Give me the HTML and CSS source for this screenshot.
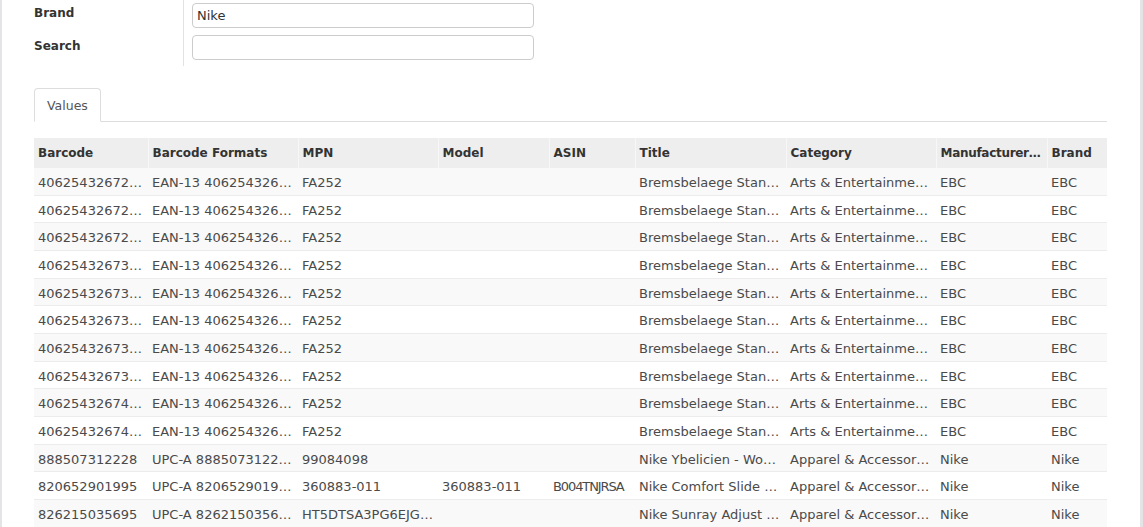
FILE: index.html
```html
<!DOCTYPE html>
<html>
<head>
<meta charset="utf-8">
<link rel="stylesheet" href="styles.css">
</head>
<body>
<div class="panel">
  <div class="form">
    <div class="labels">
      <div class="label">Brand</div>
      <div class="label">Search</div>
    </div>
    <div class="fields">
      <div class="field"><input class="input" type="text" value="Nike"></div>
      <div class="field"><input class="input" type="text" value=""></div>
    </div>
  </div>

  <div class="tabs">
    <div class="tab">Values</div>
  </div>

  <table class="grid">
    <colgroup>
      <col class="c-barcode"><col class="c-formats"><col class="c-mpn"><col class="c-model"><col class="c-asin"><col class="c-title"><col class="c-category"><col class="c-manu"><col class="c-brand">
    </colgroup>
    <thead>
      <tr><th>Barcode</th><th>Barcode Formats</th><th>MPN</th><th>Model</th><th>ASIN</th><th>Title</th><th>Category</th><th class="tight-head">Manufacturer Name</th><th>Brand</th></tr>
    </thead>
    <tbody>
      <tr><td>4062543267200</td><td>EAN-13 4062543267200</td><td>FA252</td><td></td><td></td><td>Bremsbelaege Standard FA252</td><td>Arts &amp; Entertainment &gt; Hobbies</td><td>EBC</td><td>EBC</td></tr>
      <tr><td>4062543267217</td><td>EAN-13 4062543267217</td><td>FA252</td><td></td><td></td><td>Bremsbelaege Standard FA252</td><td>Arts &amp; Entertainment &gt; Hobbies</td><td>EBC</td><td>EBC</td></tr>
      <tr><td>4062543267293</td><td>EAN-13 4062543267293</td><td>FA252</td><td></td><td></td><td>Bremsbelaege Standard FA252</td><td>Arts &amp; Entertainment &gt; Hobbies</td><td>EBC</td><td>EBC</td></tr>
      <tr><td>4062543267309</td><td>EAN-13 4062543267309</td><td>FA252</td><td></td><td></td><td>Bremsbelaege Standard FA252</td><td>Arts &amp; Entertainment &gt; Hobbies</td><td>EBC</td><td>EBC</td></tr>
      <tr><td>4062543267316</td><td>EAN-13 4062543267316</td><td>FA252</td><td></td><td></td><td>Bremsbelaege Standard FA252</td><td>Arts &amp; Entertainment &gt; Hobbies</td><td>EBC</td><td>EBC</td></tr>
      <tr><td>4062543267323</td><td>EAN-13 4062543267323</td><td>FA252</td><td></td><td></td><td>Bremsbelaege Standard FA252</td><td>Arts &amp; Entertainment &gt; Hobbies</td><td>EBC</td><td>EBC</td></tr>
      <tr><td>4062543267330</td><td>EAN-13 4062543267330</td><td>FA252</td><td></td><td></td><td>Bremsbelaege Standard FA252</td><td>Arts &amp; Entertainment &gt; Hobbies</td><td>EBC</td><td>EBC</td></tr>
      <tr><td>4062543267347</td><td>EAN-13 4062543267347</td><td>FA252</td><td></td><td></td><td>Bremsbelaege Standard FA252</td><td>Arts &amp; Entertainment &gt; Hobbies</td><td>EBC</td><td>EBC</td></tr>
      <tr><td>4062543267408</td><td>EAN-13 4062543267408</td><td>FA252</td><td></td><td></td><td>Bremsbelaege Standard FA252</td><td>Arts &amp; Entertainment &gt; Hobbies</td><td>EBC</td><td>EBC</td></tr>
      <tr><td>4062543267415</td><td>EAN-13 4062543267415</td><td>FA252</td><td></td><td></td><td>Bremsbelaege Standard FA252</td><td>Arts &amp; Entertainment &gt; Hobbies</td><td>EBC</td><td>EBC</td></tr>
      <tr><td>888507312228</td><td>UPC-A 888507312228</td><td>99084098</td><td></td><td></td><td>Nike Ybelicien - Women's Shoes</td><td>Apparel &amp; Accessories &gt; Shoes</td><td>Nike</td><td>Nike</td></tr>
      <tr><td>820652901995</td><td>UPC-A 820652901995</td><td>360883-011</td><td>360883-011</td><td class="tight">B004TNJRSA</td><td>Nike Comfort Slide 2 Men's Sandal</td><td>Apparel &amp; Accessories &gt; Shoes</td><td>Nike</td><td>Nike</td></tr>
      <tr><td>826215035695</td><td>UPC-A 826215035695</td><td>HT5DTSA3PG6EJG3KX</td><td></td><td></td><td>Nike Sunray Adjust 5 Sandal</td><td>Apparel &amp; Accessories &gt; Shoes</td><td>Nike</td><td>Nike</td></tr>
    </tbody>
  </table>
</div>
</body>
</html>
```

FILE: styles.css
```css
html, body {
  margin: 0;
  padding: 0;
  background: #e4e4e6;
  height: 100%;
  overflow: hidden;
}

.panel {
  margin: 0 3px 0 2px;
  background: #ffffff;
  height: 100%;
  padding: 0 33px 0 32px;
  font-family: "DejaVu Sans", sans-serif;
  font-size: 13px;
  color: #4a4a4a;
}

.form {
  display: flex;
  padding-bottom: 1px;
}

.labels {
  width: 149px;
  border-right: 1px solid #e2e2e2;
}

.label {
  height: 33px;
  box-sizing: border-box;
  padding-top: 4px;
  line-height: 19px;
  font-weight: bold;
  font-size: 12px;
  color: #333333;
}

.fields {
  padding-left: 8px;
}

.field {
  height: 32px;
  box-sizing: border-box;
  padding-top: 3px;
}

.input {
  display: block;
  box-sizing: border-box;
  width: 342px;
  height: 25px;
  margin: 0;
  border: 1px solid #cccccc;
  border-radius: 4px;
  padding: 0 4px;
  font-family: "DejaVu Sans", sans-serif;
  font-size: 13px;
  color: #333333;
  background: #ffffff;
  outline: none;
}

.tabs {
  margin-top: 21px;
  display: flex;
  border-bottom: 1px solid #dddddd;
}

.tab {
  height: 32px;
  line-height: 33px;
  padding: 0 12px;
  border: 1px solid #dddddd;
  border-bottom: 1px solid #ffffff;
  border-radius: 4px 4px 0 0;
  margin-bottom: -1px;
  background: #ffffff;
  color: #555555;
  font-size: 12.5px;
}

.grid {
  margin-top: 16px;
  width: 1073px;
  table-layout: fixed;
  border-collapse: collapse;
}

.c-barcode { width: 114px; }
.c-formats { width: 150px; }
.c-mpn { width: 140px; }
.c-model { width: 111px; }
.c-asin { width: 86px; }
.c-title { width: 151px; }
.c-category { width: 150px; }
.c-manu { width: 111px; }
.c-brand { width: 60px; }

.grid th {
  height: 30px;
  padding: 0 4px;
  text-align: left;
  background: #eeeeee;
  color: #333333;
  font-weight: bold;
  font-size: 12px;
  white-space: nowrap;
  overflow: hidden;
  text-overflow: ellipsis;
  border-left: 1px solid #f7f7f7;
}

.grid th:first-child {
  border-left: none;
}

.grid th.tight-head {
  letter-spacing: -0.3px;
}

.grid td {
  height: 18.67px;
  line-height: 18.67px;
  padding: 6px 4px 2px;
  border-top: 1px solid #ececec;
  white-space: nowrap;
  overflow: hidden;
  text-overflow: ellipsis;
}

.grid tbody tr:first-child td {
  border-top: none;
}

.grid tbody tr:nth-child(odd) td {
  background: #f9f9f9;
}

.grid td.tight {
  letter-spacing: -1.1px;
  overflow: visible;
  text-overflow: clip;
}
```
